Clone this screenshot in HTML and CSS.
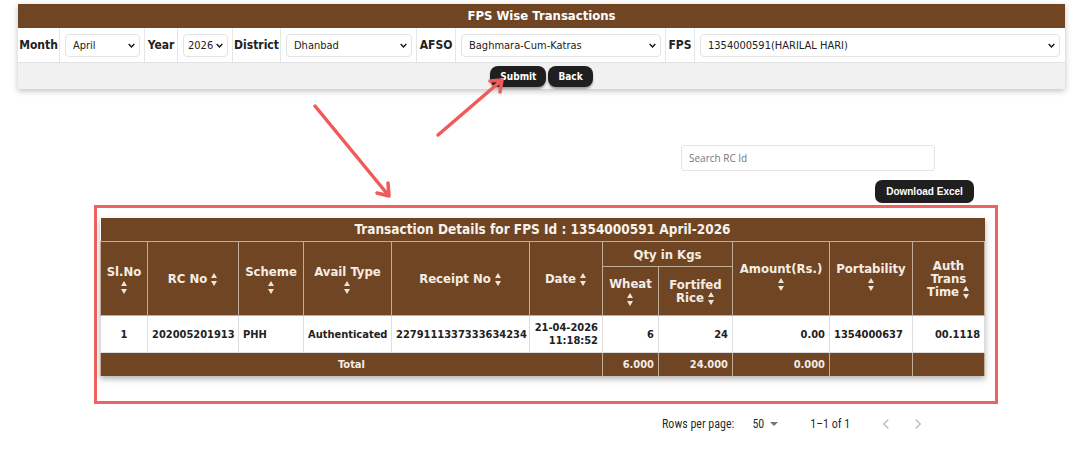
FILE: index.html
```html
<!DOCTYPE html>
<html lang="en">
<head>
    <meta charset="UTF-8">
    <meta name="viewport" content="width=device-width, initial-scale=1.0">
    <title>FPS Wise Transactions</title>
    <link rel="stylesheet" href="styles.css">
</head>
<body>
    <div class="panel">
        <h2 class="panel-title">FPS Wise Transactions</h2>
        <div class="filters">
            <div class="cell label">Month</div>
            <div class="cell"><span class="pick"><select><option>April</option></select><svg class="chev" viewBox="0 0 10 6"><path d="M1 1l4 4 4-4" fill="none" stroke="#111" stroke-width="2"/></svg></span></div>
            <div class="cell label">Year</div>
            <div class="cell"><span class="pick"><select class="short"><option>2026</option></select><svg class="chev" viewBox="0 0 10 6"><path d="M1 1l4 4 4-4" fill="none" stroke="#111" stroke-width="2"/></svg></span></div>
            <div class="cell label">District</div>
            <div class="cell"><span class="pick"><select><option>Dhanbad</option></select><svg class="chev" viewBox="0 0 10 6"><path d="M1 1l4 4 4-4" fill="none" stroke="#111" stroke-width="2"/></svg></span></div>
            <div class="cell label">AFSO</div>
            <div class="cell"><span class="pick"><select><option>Baghmara-Cum-Katras</option></select><svg class="chev" viewBox="0 0 10 6"><path d="M1 1l4 4 4-4" fill="none" stroke="#111" stroke-width="2"/></svg></span></div>
            <div class="cell label">FPS</div>
            <div class="cell last"><span class="pick"><select><option>1354000591(HARILAL HARI)</option></select><svg class="chev" viewBox="0 0 10 6"><path d="M1 1l4 4 4-4" fill="none" stroke="#111" stroke-width="2"/></svg></span></div>
        </div>
        <div class="actions">
            <button class="btn">Submit</button>
            <button class="btn">Back</button>
        </div>
    </div>

    <div class="results">
        <div class="search-row">
            <input class="search" type="text" placeholder="Search RC Id">
        </div>
        <div class="download-row">
            <button class="btn-excel">Download Excel</button>
        </div>

        <div class="outline">
            <table class="grid">
                <colgroup>
                    <col style="width: 47px">
                    <col style="width: 91px">
                    <col style="width: 65px">
                    <col style="width: 88px">
                    <col style="width: 138px">
                    <col style="width: 73px">
                    <col style="width: 56px">
                    <col style="width: 74px">
                    <col style="width: 97px">
                    <col style="width: 83px">
                    <col style="width: 72px">
                </colgroup>
                <thead>
                    <tr>
                        <th colspan="11" class="caption">Transaction Details for FPS Id : 1354000591 April-2026</th>
                    </tr>
                    <tr>
                        <th rowspan="2">Sl.No<br><i class="sort"></i></th>
                        <th rowspan="2">RC No <i class="sort"></i></th>
                        <th rowspan="2">Scheme<br><i class="sort"></i></th>
                        <th rowspan="2">Avail Type<br><i class="sort"></i></th>
                        <th rowspan="2">Receipt No <i class="sort"></i></th>
                        <th rowspan="2">Date <i class="sort"></i></th>
                        <th colspan="2" class="sub">Qty in Kgs</th>
                        <th rowspan="2" class="lift">Amount(Rs.)<br><i class="sort"></i></th>
                        <th rowspan="2" class="lift">Portability<br><i class="sort"></i></th>
                        <th rowspan="2" class="tight">Auth<br>Trans<br>Time <i class="sort"></i></th>
                    </tr>
                    <tr>
                        <th class="split">Wheat<br><i class="sort"></i></th>
                        <th class="split tight">Fortifed<br>Rice <i class="sort"></i></th>
                    </tr>
                </thead>
                <tbody>
                    <tr>
                        <td class="c">1</td>
                        <td>202005201913</td>
                        <td>PHH</td>
                        <td class="c">Authenticated</td>
                        <td class="c">2279111337333634234</td>
                        <td class="r">21-04-2026<br>11:18:52</td>
                        <td class="r">6</td>
                        <td class="r">24</td>
                        <td class="r">0.00</td>
                        <td>1354000637</td>
                        <td class="r">00.1118</td>
                    </tr>
                </tbody>
                <tfoot>
                    <tr>
                        <td colspan="6" class="c">Total</td>
                        <td class="r">6.000</td>
                        <td class="r">24.000</td>
                        <td class="r">0.000</td>
                        <td></td>
                        <td></td>
                    </tr>
                </tfoot>
            </table>
        </div>

        <div class="pager">
            <span>Rows per page:</span>
            <span class="per-page">50 <svg viewBox="0 0 10 5" class="caret"><path d="M0 0h10L5 5z" fill="#757575"/></svg></span>
            <span class="range">1–1 of 1</span>
            <svg class="nav" viewBox="0 0 24 24"><path d="M15.4 7.4L14 6l-6 6 6 6 1.4-1.4L10.8 12z" fill="#c4c4c4"/></svg>
            <svg class="nav" viewBox="0 0 24 24"><path d="M10 6L8.6 7.4 13.2 12l-4.6 4.6L10 18l6-6z" fill="#c4c4c4"/></svg>
        </div>
    </div>

    <!-- annotation arrows drawn over the screenshot -->
    <svg class="marks" viewBox="0 0 1085 451">
        <g stroke="#f05a5a" stroke-width="3.5" stroke-linecap="round" fill="none">
            <path d="M315 106L389 196M389 196L388 183M389 196L377 193"/>
            <path d="M438 135L502 80M502 80L490 81M502 80L500 92"/>
        </g>
    </svg>
</body>
</html>
```

FILE: styles.css
```css
body {
    margin: 0;
    font-family: "DejaVu Sans Condensed", "DejaVu Sans", sans-serif;
    font-stretch: condensed;
    background-color: #fff;
    color: #222;
}
.panel {
    margin: 4px 20px 0 18px;
    background-color: #fff;
    box-shadow: 0 2px 6px rgba(0,0,0,0.25);
}
.panel-title {
    margin: 0;
    height: 24px;
    line-height: 24px;
    background-color: #6f4524;
    color: #fff;
    font-size: 13px;
    text-align: center;
}
.filters {
    display: grid;
    grid-template-columns: 42px 85px 33px 55px 48px 136px 39px 210px 29px 1fr;
    height: 34px;
    border-bottom: 1px solid #e2e2e2;
}
.cell {
    display: flex;
    align-items: center;
    padding: 0 4px 0 5px;
    border-right: 1px solid #e6e6e6;
}
.cell.last {
    border-right: none;
    padding-right: 5px;
}
.cell.label {
    font-size: 12px;
    font-weight: bold;
    padding: 0 3px;
    justify-content: center;
}
.pick {
    position: relative;
    display: block;
    width: 100%;
}
.pick select {
    display: block;
    width: 100%;
    height: 23px;
    padding: 0 4px 0 7px;
    border: 1px solid #e3e3e3;
    border-radius: 4px;
    background-color: #fff;
    font-family: inherit;
    font-size: 11px;
    color: #222;
    appearance: none;
    -webkit-appearance: none;
}
.pick select.short {
    padding-left: 4px;
}
.chev {
    position: absolute;
    right: 5px;
    top: 9px;
    width: 7px;
    height: 5px;
}
.actions {
    display: flex;
    justify-content: center;
    gap: 2px;
    height: 26px;
    align-items: center;
    background-color: #f1f1f1;
}
.btn {
    background-color: #1f1f1f;
    color: #fff;
    border: none;
    border-radius: 8px;
    height: 21px;
    padding: 0 10px;
    font-family: inherit;
    font-size: 10px;
    font-weight: bold;
    box-shadow: 0 2px 2px rgba(0,0,0,0.35);
    cursor: pointer;
}
.results {
    margin-left: 94px;
    width: 904px;
}
.search-row {
    padding: 56px 0 0 587px;
}
.search {
    display: block;
    width: 254px;
    height: 26px;
    box-sizing: border-box;
    border: 1px solid #e4e4e4;
    border-radius: 3px;
    padding: 0 7px;
    font-family: "Open Sans", sans-serif;
    font-size: 10px;
    color: #333;
}
.search::placeholder {
    color: #777;
}
.download-row {
    display: flex;
    justify-content: flex-end;
    padding: 9px 24px 0 0;
}
.btn-excel {
    height: 23px;
    width: 99px;
    background-color: #1f1f1f;
    color: #fff;
    border: none;
    border-radius: 7px;
    font-family: "Liberation Sans", Arial, sans-serif;
    font-size: 10px;
    font-weight: bold;
}
.outline {
    margin-top: 2px;
    border: 3px solid #f06262;
    padding: 10px 11px 25px 3px;
}
.grid {
    width: 884px;
    border-collapse: collapse;
    table-layout: fixed;
    box-shadow: 0 3px 6px rgba(0,0,0,0.3);
    font-size: 11px;
}
.grid th {
    background-color: #6f4524;
    color: #f4ede4;
    font-size: 13px;
    line-height: 15px;
    border: 1px solid #c2ad97;
    padding: 0 2px;
    text-align: center;
}
.grid th.caption {
    height: 23px;
    font-size: 13.5px;
    color: #f7f2ea;
    border-top: none;
    border-left: none;
    border-right: none;
}
.grid th.sub {
    height: 24px;
}
.grid th.split {
    height: 48px;
}
.grid th.tight {
    line-height: 13px;
}
.grid th.lift {
    padding-bottom: 6px;
}
.sort {
    display: inline-block;
    width: 7px;
    height: 13px;
    vertical-align: middle;
    position: relative;
}
.sort::before,
.sort::after {
    content: "";
    position: absolute;
    left: 0;
    border-left: 3px solid transparent;
    border-right: 3px solid transparent;
}
.sort::before {
    top: 0;
    border-bottom: 5px solid #ece4da;
}
.sort::after {
    bottom: 0;
    border-top: 5px solid #ece4da;
}
.grid td {
    font-weight: bold;
    padding: 0 4px;
    line-height: 13px;
    border: 1px solid #dedede;
}
.grid tbody td {
    height: 36px;
    background-color: #fff;
    color: #222;
}
.grid tfoot td {
    height: 23px;
    background-color: #6f4524;
    color: #f4ede4;
    border: 1px solid #c2ad97;
    border-bottom: none;
}
.grid .c { text-align: center; }
.grid .r { text-align: right; }
.pager {
    display: flex;
    align-items: center;
    height: 40px;
    padding-left: 568px;
    font-family: Roboto, sans-serif;
    font-size: 12px;
    color: rgba(0,0,0,0.87);
}
.per-page {
    display: flex;
    align-items: center;
    gap: 6px;
    margin-left: 18px;
}
.caret {
    width: 8px;
    height: 4px;
}
.range {
    margin-left: 32px;
    margin-right: 26px;
}
.nav {
    width: 20px;
    height: 20px;
    margin-right: 12px;
}
.marks {
    position: absolute;
    left: 0;
    top: 0;
    width: 1085px;
    height: 451px;
    pointer-events: none;
}
```
